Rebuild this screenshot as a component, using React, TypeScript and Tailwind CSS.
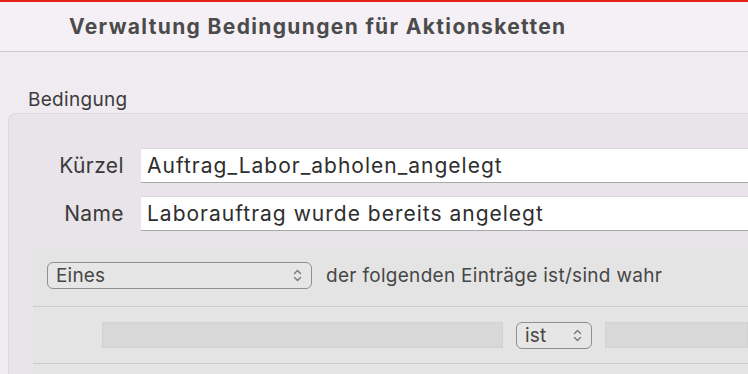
const font = { fontFamily: 'Inter, "Noto Sans", sans-serif' }

function UpDown({ className }: { className?: string }) {
  return (
    <svg viewBox="0 0 9 15" className={className} fill="none" stroke="currentColor" strokeWidth="1.4" strokeLinecap="round" strokeLinejoin="round">
      <path d="M1.5 5.5 4.5 2.5l3 3" />
      <path d="M1.5 9.5 4.5 12.5l3-3" />
    </svg>
  )
}

function Select({ label, className }: { label: string; className: string }) {
  return (
    <div
      className={`flex items-center justify-between rounded-[6px] border border-[#8f8f8f] bg-[#e6e6e6] pl-[8px] pr-[9px] text-[19px] leading-none tracking-[0.2px] text-[#474747] ${className}`}
    >
      <span>{label}</span>
      <UpDown className="h-[15px] w-[9px] text-[#777]" />
    </div>
  )
}

function Field({ label, value }: { label: string; value: string }) {
  return (
    <div className="flex items-center">
      <span className="w-[115px] text-right text-[21px] tracking-[0.4px] text-[#3a3a3a]">{label}</span>
      <div className="ml-[17px] flex h-[35px] flex-1 items-center border-t border-b border-t-[#dcdcdc] border-b-[#a8a8a8] bg-white pl-[6px] text-[21px] tracking-[1px] whitespace-nowrap text-[#2e2e2e]">
        {value}
      </div>
    </div>
  )
}

export default function App() {
  return (
    <div style={font} className="h-[374px] w-[748px] overflow-hidden border-t-2 border-[#e2231a] bg-[#efebf0]">
      <div className="flex h-[50px] items-center border-b border-[#cbc7cc] bg-[#f4f0f6] pl-[69px]">
        <h1 className="text-[21px] font-bold tracking-[1.35px] whitespace-nowrap text-[#4b4b4b]">Verwaltung Bedingungen für Aktionsketten</h1>
      </div>
      <div className="pt-[38px]">
        <div className="pl-[28px] text-[19px] leading-[20px] tracking-[0.3px] text-[#3c3c3c]">Bedingung</div>
        <div className="ml-[8px] mt-[3px] rounded-tl-[8px] border-t border-l border-[#dcd8dd] bg-[#e8e4e9] pt-[34px]">
          <div className="flex flex-col gap-[13px]">
            <Field label="Kürzel" value="Auftrag_Labor_abholen_angelegt" />
            <Field label="Name" value="Laborauftrag wurde bereits angelegt" />
          </div>
          <div className="ml-[24px] mt-[16px] bg-[#e4e4e4]">
            <div className="flex h-[60px] items-center gap-[14px] border-b border-[#cbcbcb] pl-[14px] pb-[2px]">
              <Select label="Eines" className="h-[27px] w-[265px]" />
              <span className="text-[19px] leading-none tracking-[0.3px] whitespace-nowrap text-[#474747]">der folgenden Einträge ist/sind wahr</span>
            </div>
            <div className="flex h-[57px] items-center border-b border-[#cbcbcb] pl-[69px]">
              <div className="h-[26px] w-[401px] border border-[#d2d2d2] bg-[#d8d8d8]" />
              <Select label="ist" className="ml-[13px] h-[27px] w-[76px]" />
              <div className="ml-[13px] h-[26px] flex-1 border border-[#d2d2d2] bg-[#d8d8d8]" />
            </div>
            <div className="h-[20px]" />
          </div>
        </div>
      </div>
    </div>
  )
}
